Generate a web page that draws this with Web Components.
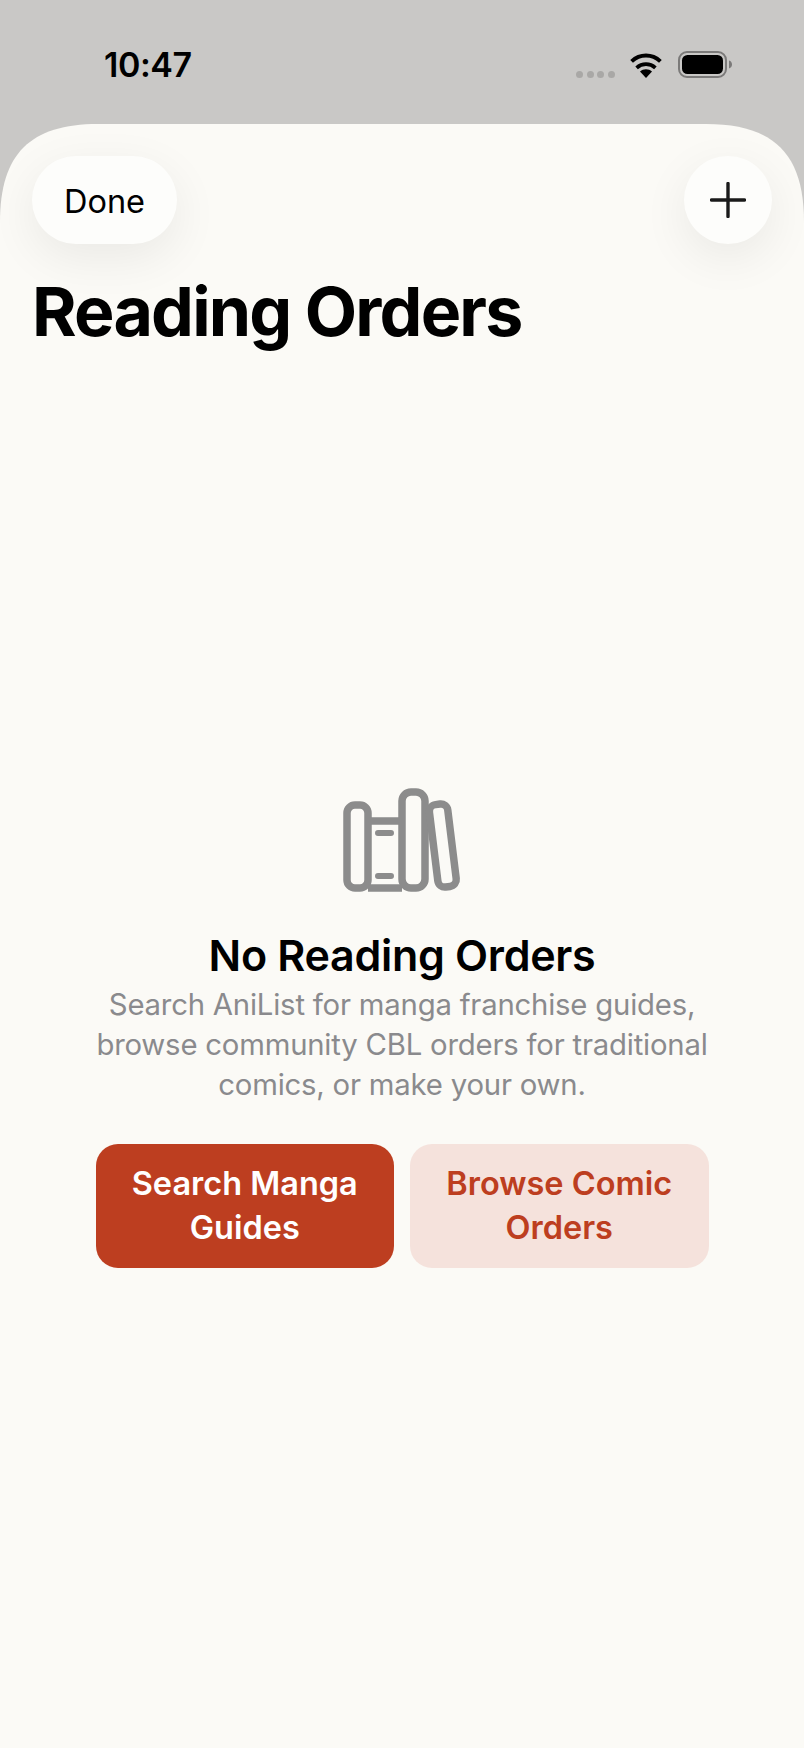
<!doctype html>
<html><head><meta charset="utf-8">
<style>
html,body{margin:0;padding:0;background:#c9c8c6;}
body{width:804px;height:1748px;overflow:hidden;font-family:Inter,"Liberation Sans",sans-serif;}
</style></head>
<body>
<app-screen>
  <status-bar slot="status" time="10:47"></status-bar>
  <sheet-view>
    <nav-bar>
      <pill-button>Done</pill-button>
      <add-button></add-button>
    </nav-bar>
    <large-title>Reading Orders</large-title>
    <empty-state heading="No Reading Orders">
      Search AniList for manga franchise guides, browse community CBL orders for traditional comics, or make your own.
      <action-button slot="actions" kind="primary">Search Manga Guides</action-button>
      <action-button slot="actions" kind="secondary">Browse Comic Orders</action-button>
    </empty-state>
  </sheet-view>
</app-screen>
<script>
function def(name, html, init){
  customElements.define(name, class extends HTMLElement{
    constructor(){super();this.attachShadow({mode:'open'}).innerHTML=html;}
    connectedCallback(){ if(init) init(this); }
  });
}
def('app-screen',`<style>:host{display:flex;flex-direction:column;width:804px;height:1748px;}</style><slot name="status"></slot><slot></slot>`);
def('status-bar',`<style>
:host{display:flex;height:124px;box-sizing:border-box;position:relative;color:#000;flex:none}
.time{font:600 34px/40px Inter,sans-serif;margin:45px 0 0 104px;letter-spacing:-.45px}
.right{margin-left:auto;display:flex;align-items:flex-start;margin-right:70px;padding-top:51px}
.dots{display:flex;gap:3.600px;margin-top:19.500px;margin-right:13px}
.dots i{width:7px;height:7px;border-radius:50%;background:#a9a8a6}
svg{display:block}
</style>
<span class="time"></span>
<div class="right">
 <div class="dots"><i></i><i></i><i></i><i></i></div>
 <svg width="36" height="28" viewBox="0 0 36 28" style="margin-right:14px">
  <path d="M18 27l-6-6.6c3.400-2.800 8.600-2.800 12 0z" fill="#000"/>
  <path d="M8.600 16.800c5.400-4.800 13.400-4.800 18.800 0" fill="none" stroke="#000" stroke-width="3.800"/>
  <path d="M3.600 10.400c8.400-7.800 20.400-7.800 28.800 0" fill="none" stroke="#000" stroke-width="4"/>
 </svg>
 <svg width="56" height="28" viewBox="0 0 56 28">
  <rect x="1" y="1" width="47" height="25" rx="8" fill="none" stroke="#7b7a79" stroke-width="2"/>
  <rect x="4" y="4" width="41" height="19" rx="5.500" fill="#000"/>
  <path d="M51 9.500c2 .6 3 2.200 3 4s-1 3.400-3 4z" fill="#7b7a79"/>
 </svg>
</div>`, el=>{el.shadowRoot.querySelector('.time').textContent=el.getAttribute('time')});
def('sheet-view',`<style>
:host{display:flex;flex-direction:column;flex:1;background:#fbfaf6;clip-path:path("M0 98C0 30 30 0 98 0H706C774 0 804 30 804 98V1624H0Z")}
</style><slot></slot>`);
def('nav-bar',`<style>:host{display:flex;justify-content:space-between;padding:32px 32px 0;flex:none}</style><slot></slot>`);
def('pill-button',`<style>
:host{display:flex;align-items:center;justify-content:center;box-sizing:border-box;width:145px;height:88px;padding-top:3px;border-radius:44px;background:#fdfdfb;color:#000;font:400 32.500px/40px Inter,sans-serif;box-shadow:0 14px 48px rgba(0,0,0,.07)}
</style><slot></slot>`);
def('add-button',`<style>
:host{display:flex;align-items:center;justify-content:center;width:88px;height:88px;border-radius:50%;background:#fdfdfb;box-shadow:0 14px 48px rgba(0,0,0,.07)}
svg{display:block}
</style><svg width="36" height="36" viewBox="0 0 36 36"><path d="M18 1.500v33M1.500 18h33" stroke="#1a1a1a" stroke-width="3.400" stroke-linecap="round" fill="none"/></svg>`);
def('large-title',`<style>
:host{display:block;font:700 68px/82px Inter,sans-serif;color:#000;padding:26px 32px 0 32px;letter-spacing:-1.800px;flex:none}
</style><slot></slot>`);
def('empty-state',`<style>
:host{display:flex;flex-direction:column;align-items:center;padding-top:419px;color:#000}
svg{display:block;margin-bottom:28px;margin-left:-7px}
h2{margin:0;font:600 43px/52px Inter,sans-serif;letter-spacing:-.3px;text-align:center}
p{margin:4px 0 0;width:640px;font:400 29.300px/40px Inter,sans-serif;letter-spacing:-.2px;color:#8a8a8d;text-align:center}
.actions{display:flex;gap:16px;margin-top:38.500px}
</style>
<svg width="160" height="130" viewBox="0 0 160 130" fill="none" stroke="#8c8c8c" stroke-width="7.500">
  <rect x="28" y="34" width="21" height="83" rx="8"/>
  <path d="M49 50H83M49 117H83"/>
  <path d="M59 62H72M59 105H72" stroke-linecap="round" stroke-width="6"/>
  <rect x="83" y="21" width="23" height="96" rx="9"/>
  <rect x="114.500" y="33" width="18.500" height="83" rx="7" transform="rotate(-7 124 74)"/>
</svg>
<h2></h2><p><slot></slot></p><div class="actions"><slot name="actions"></slot></div>`, el=>{el.shadowRoot.querySelector('h2').textContent=el.getAttribute('heading')});
def('action-button',`<style>
:host{display:flex;align-items:center;justify-content:center;box-sizing:border-box;width:298.500px;height:124px;border-radius:22px;padding:0 24px;font:600 32.500px/44px Inter,sans-serif;text-align:center}
:host([kind=primary]){background:#bd3e20;color:#fff}
:host([kind=secondary]){background:#f5e2dc;color:#bd3e20}
</style><slot></slot>`);
</script>
</body></html>
